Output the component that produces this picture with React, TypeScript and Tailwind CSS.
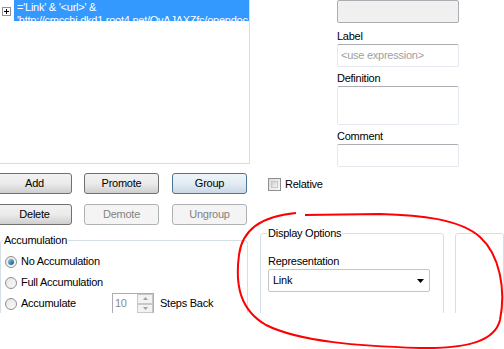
import React from "react";

const font = "font-['Liberation_Sans',Arial,sans-serif] text-[11px] tracking-[-0.25px]";

function WinButton({
  label,
  variant = "normal",
  className = "",
}: {
  label: string;
  variant?: "normal" | "hover" | "disabled";
  className?: string;
}) {
  const styles = {
    normal:
      "border-[#707070] bg-gradient-to-b from-[#f2f2f2] via-[#ebebeb] to-[#cfcfcf] text-black",
    hover:
      "border-[#4f7391] bg-gradient-to-b from-[#eef4f9] via-[#e2ecf4] to-[#c9d8e5] text-black",
    disabled: "border-[#adb2b5] bg-[#f4f4f4] text-[#838383]",
  };
  return (
    <div
      className={`flex h-[21px] w-[75px] items-center justify-center rounded-[3px] border ${styles[variant]} ${className}`}
    >
      {label}
    </div>
  );
}

function Radio({ checked, label }: { checked?: boolean; label: string }) {
  return (
    <div className="flex h-[21px] items-center gap-[4px]">
      <div className="flex h-[12px] w-[12px] items-center justify-center rounded-full border border-[#8f8f8f] bg-gradient-to-br from-[#e6e6e6] to-[#fafafa]">
        {checked && (
          <div className="h-[6px] w-[6px] rounded-full bg-gradient-to-br from-[#8ad0f4] to-[#0d4f86]" />
        )}
      </div>
      <span>{label}</span>
    </div>
  );
}

export default function App() {
  return (
    <div className={`relative h-[349px] w-[504px] overflow-hidden bg-white text-black ${font}`}>
      <div className="h-[313px] overflow-hidden">
        {/* top row: expression list + properties */}
        <div className="flex h-[170px]">
          <div className="h-[164px] w-[250px] shrink-0 border-b border-r border-[#dcdcdc]">
            <div className="flex">
              <div className="ml-[2px] mt-[7px] flex h-[9px] w-[9px] items-center justify-center border border-[#919191] bg-white text-[9px] leading-none">
                <svg width="7" height="7" viewBox="0 0 7 7">
                  <path d="M1 3.5h5M3.5 1v5" stroke="#000" strokeWidth="1" />
                </svg>
              </div>
              <div className="ml-[3px] h-[21px] flex-1 overflow-hidden whitespace-nowrap bg-[#3399ff] pl-[3px] leading-[13px] text-white">
                <div className="pt-[1px]">='Link' &amp; '&lt;url&gt;' &amp;</div>
                <div>'http://cmcchi.dkd1.root4.net/QvAJAXZfc/opendoc.htm</div>
              </div>
            </div>
          </div>

          <div className="ml-[87px] flex w-[122px] flex-col">
            <div className="h-[23px] rounded-[2px] border border-[#abadb3] bg-[#f0f0f0]" />
            <div className="mt-[5px] h-[16px] leading-[16px]">Label</div>
            <div className="flex h-[23px] items-center rounded-[2px] border border-[#e3e9ef] border-t-[#abadb3] px-[3px] text-[#a0a0a0]">
              &lt;use expression&gt;
            </div>
            <div className="mt-[3px] h-[16px] leading-[16px]">Definition</div>
            <div className="h-[39px] rounded-[2px] border border-[#e3e9ef] border-t-[#abadb3]" />
            <div className="mt-[3px] h-[16px] leading-[16px]">Comment</div>
            <div className="h-[23px] rounded-[2px] border border-[#e3e9ef] border-t-[#abadb3]" />
          </div>
        </div>

        {/* buttons */}
        <div className="mt-[3px] flex">
          <div className="ml-[-3px] flex w-[253px] shrink-0 flex-col gap-[10px]">
            <div className="flex gap-[12px]">
              <WinButton label="Add" />
              <WinButton label="Promote" />
              <WinButton label="Group" variant="hover" className="ml-[1px]" />
            </div>
            <div className="flex gap-[12px]">
              <WinButton label="Delete" />
              <WinButton label="Demote" variant="disabled" />
              <WinButton label="Ungroup" variant="disabled" className="ml-[1px]" />
            </div>
          </div>
          <div className="ml-[18px] mt-[5px] flex h-[13px] items-center gap-[4px]">
            <div className="h-[13px] w-[13px] border border-[#8f8f8f] bg-gradient-to-br from-[#dcdcdc] to-[#f8f8f8] p-[2px]">
              <div className="h-full w-full border border-[#c8c8c8] bg-gradient-to-br from-[#d0d0d0] to-[#f4f4f4]" />
            </div>
            <span>Relative</span>
          </div>
        </div>

        {/* bottom group boxes */}
        <div className="mt-[8px] flex">
          <div className="relative mt-[7px] h-[90px] w-[248px] shrink-0 rounded-[3px] border border-[#d5dfe5] pl-[4px] pt-[10px]">
            <div className="absolute left-[2px] top-[-8px] bg-white px-[1px] leading-[14px]">Accumulation</div>
            <Radio checked label="No Accumulation" />
            <Radio label="Full Accumulation" />
            <div className="flex items-center">
              <div className="w-[107px]">
                <Radio label="Accumulate" />
              </div>
              <div className="flex h-[21px] w-[42px] items-stretch border border-[#abadb3]">
                <div className="flex flex-1 items-center pl-[2px] text-[#8a8a8a]">10</div>
                <div className="flex w-[16px] flex-col">
                  <div className="flex flex-1 items-center justify-center border border-[#c8c8c8] bg-[#f2f2f2]">
                    <svg width="5" height="3" viewBox="0 0 5 3">
                      <path d="M0 3L2.5 0L5 3Z" fill="#a0a0a0" />
                    </svg>
                  </div>
                  <div className="flex flex-1 items-center justify-center border border-[#c8c8c8] bg-[#f2f2f2]">
                    <svg width="5" height="3" viewBox="0 0 5 3">
                      <path d="M0 0L2.5 3L5 0Z" fill="#a0a0a0" />
                    </svg>
                  </div>
                </div>
              </div>
              <span className="ml-[6px]">Steps Back</span>
            </div>
          </div>

          <div className="relative ml-[12px] h-[90px] w-[184px] shrink-0 rounded-[3px] border border-[#d5dfe5] px-[7px] pt-[19px]">
            <div className="absolute left-[6px] top-[-8px] bg-white px-[1px] leading-[14px]">Display Options</div>
            <div className="h-[16px] leading-[16px]">Representation</div>
            <div className="flex h-[23px] w-[162px] items-center justify-between rounded-[2px] border border-[#c5c5c5] bg-white pl-[4px] pr-[5px]">
              <span>Link</span>
              <svg width="7" height="4" viewBox="0 0 7 4">
                <path d="M0 0H7L3.5 4Z" fill="#000" />
              </svg>
            </div>
          </div>

          <div className="ml-[11px] h-[90px] w-[60px] rounded-[3px] border border-[#d5dfe5]" />
        </div>
      </div>

      {/* red hand-drawn circle */}
      <svg className="pointer-events-none absolute left-0 top-0" width="504" height="349" viewBox="0 0 504 349">
        <path
          d="M296 213 C262 216, 242 230, 239 255 C235 285, 240 310, 266 325 C300 342, 360 346, 420 348 C470 349, 495 340, 500 320 C506 290, 500 255, 480 237 C460 219, 420 215, 380 214 L305 215"
          fill="none"
          stroke="#ff0000"
          strokeWidth="2"
        />
      </svg>
    </div>
  );
}
